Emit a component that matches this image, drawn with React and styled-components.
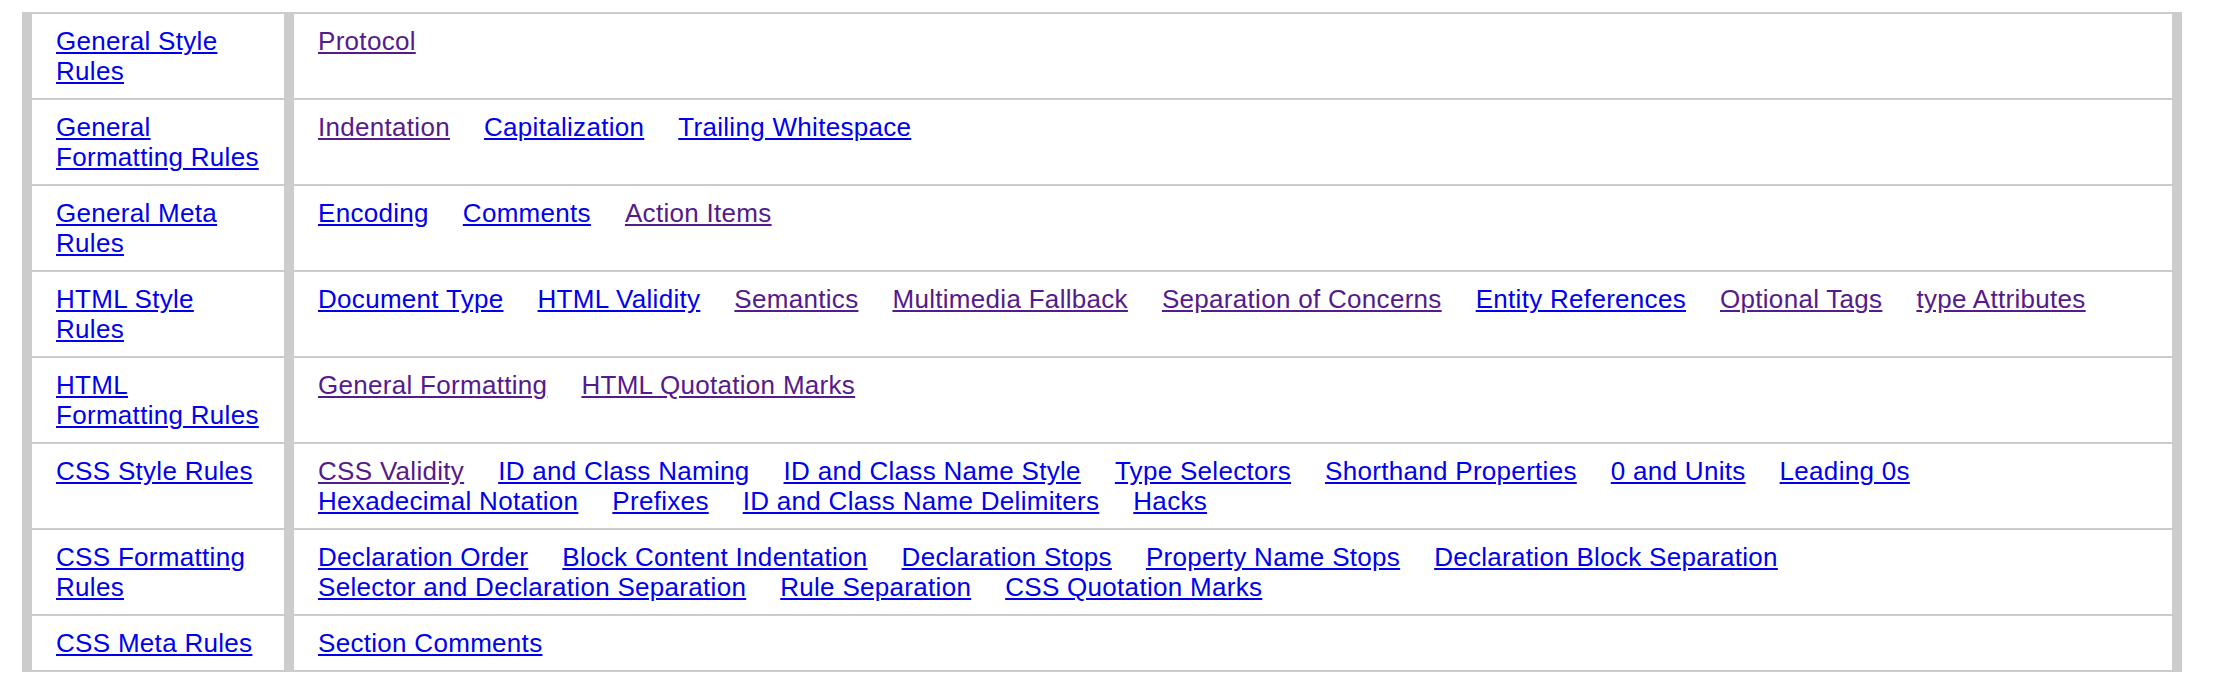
import React from "react";
import styled, { createGlobalStyle } from "styled-components";

const GlobalStyle = createGlobalStyle`
    body {
        margin: 0;
        background: #fff;
        font-family: "Liberation Sans", Arial, Helvetica, sans-serif;
    }
`

const Page = styled.div`
    padding: 12px 0 0 22px;
`

const Table = styled.div`
    width: 2160px;
    box-sizing: border-box;
    border-top: 2px solid #ccc;
    border-left: 10px solid #ccc;
    border-right: 10px solid #ccc;
`

const Row = styled.div`
    display: grid;
    grid-template-columns: 262px 1fr;
    border-bottom: 2px solid #ccc;
`

const NavCell = styled.div`
    box-sizing: border-box;
    padding: 12px 24px;
    border-right: 10px solid #ccc;
    font-size: 26px;
    line-height: 30px;
    letter-spacing: 0.3px;
`

const LinkCell = styled.div`
    padding: 12px 24px;
    display: flex;
    flex-wrap: wrap;
    column-gap: 34px;
    font-size: 26px;
    line-height: 30px;
    letter-spacing: 0.3px;
`

const Link = styled.a`
    color: ${props => props.$visited ? "#551a8b" : "#0000ee"};
    text-decoration: underline;
    cursor: pointer;
`

// second item = already visited (purple)
const sections = [
    { title: "General Style Rules", links: [["Protocol", 1]] },
    { title: "General Formatting Rules", links: [["Indentation", 1], ["Capitalization"], ["Trailing Whitespace"]] },
    { title: "General Meta Rules", links: [["Encoding"], ["Comments"], ["Action Items", 1]] },
    {
        title: "HTML Style Rules",
        links: [["Document Type"], ["HTML Validity"], ["Semantics", 1], ["Multimedia Fallback", 1],
            ["Separation of Concerns", 1], ["Entity References"], ["Optional Tags", 1], ["type Attributes", 1]]
    },
    { title: "HTML Formatting Rules", links: [["General Formatting", 1], ["HTML Quotation Marks", 1]] },
    {
        title: "CSS Style Rules",
        links: [["CSS Validity", 1], ["ID and Class Naming"], ["ID and Class Name Style"], ["Type Selectors"],
            ["Shorthand Properties"], ["0 and Units"], ["Leading 0s"], ["Hexadecimal Notation"], ["Prefixes"],
            ["ID and Class Name Delimiters"], ["Hacks"]]
    },
    {
        title: "CSS Formatting Rules",
        links: [["Declaration Order"], ["Block Content Indentation"], ["Declaration Stops"], ["Property Name Stops"],
            ["Declaration Block Separation"], ["Selector and Declaration Separation"], ["Rule Separation"],
            ["CSS Quotation Marks"]]
    },
    { title: "CSS Meta Rules", links: [["Section Comments"]] },
]

export default function App() {
    return (
        <>
            <GlobalStyle />
            <Page>
                <Table>
                    {sections.map(section => (
                        <Row key={section.title}>
                            <NavCell>
                                <Link>{section.title}</Link>
                            </NavCell>
                            <LinkCell>
                                {section.links.map(([label, v]) => (
                                    <Link key={label} $visited={!!v}>{label}</Link>
                                ))}
                            </LinkCell>
                        </Row>
                    ))}
                </Table>
            </Page>
        </>
    )
}
